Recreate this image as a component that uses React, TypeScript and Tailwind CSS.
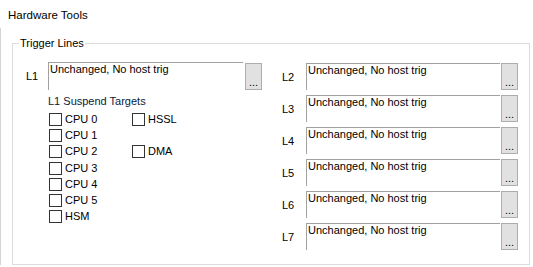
const lines = ['L2', 'L3', 'L4', 'L5', 'L6', 'L7']

const targets: [string, string | null][] = [
  ['CPU 0', 'HSSL'],
  ['CPU 1', null],
  ['CPU 2', 'DMA'],
  ['CPU 3', null],
  ['CPU 4', null],
  ['CPU 5', null],
  ['HSM', null],
]

function TriggerBox({ wide }: { wide?: boolean }) {
  return (
    <div className="flex items-center">
      <div
        className={`${wide ? 'w-[195px] h-[28px]' : 'w-[194px] h-[27px]'} border-t border-l border-[#a0a0a0] bg-white pl-[1px] leading-[13px]`}
      >
        Unchanged, No host trig
      </div>
      <button
        className={`${wide ? 'ml-[2px]' : 'ml-[1px]'} w-[17px] h-[27px] border border-[#adadad] bg-[#e1e1e1] flex items-end justify-center pb-[2px] leading-[10px] text-[11px]`}
      >
        ...
      </button>
    </div>
  )
}

function Check({ label }: { label: string }) {
  return (
    <div className="flex items-center h-[16.3px]">
      <span className="w-[13px] h-[13px] border border-[#333333] bg-white" />
      <span className="ml-[3px] leading-[13px]">{label}</span>
    </div>
  )
}

export default function App() {
  return (
    <div
      className="w-[533px] h-[267px] bg-white overflow-hidden text-[11px] text-black"
      style={{ fontFamily: '"Liberation Sans", Arial, sans-serif' }}
    >
      <div className="h-[28px] pl-[8px] pt-[8px] text-[11.5px] leading-[14px]">Hardware Tools</div>

      <div className="h-[237px] border-l border-[#d4d4d4] pl-[11px] pt-[8px]">
        <fieldset className="w-[516px] h-[227px] border border-[#dcdcdc] box-content">
          <legend className="ml-[6px] px-[1px] leading-[14px]">Trigger Lines</legend>

          <div className="flex">
            {/* L1 + suspend targets */}
            <div className="w-[256px] pl-[13px] pt-[12px]">
              <div className="flex items-center">
                <span className="w-[22px] leading-[13px]">L1</span>
                <TriggerBox wide />
              </div>
              <div className="pl-[22px] mt-[4px]">
                <div className="leading-[14px] text-[#0a1a3a]">L1 Suspend Targets</div>
                <div className="mt-[3px] pl-[1px]">
                  {targets.map(([a, b]) => (
                    <div key={a} className="flex">
                      <div className="w-[83px]">
                        <Check label={a} />
                      </div>
                      {b && <Check label={b} />}
                    </div>
                  ))}
                </div>
              </div>
            </div>

            {/* L2..L7 */}
            <div className="pl-[13px] pt-[13px] flex flex-col gap-[5px]">
              {lines.map((l) => (
                <div key={l} className="flex items-center">
                  <span className="w-[24px] leading-[13px] pt-[2px]">{l}</span>
                  <TriggerBox />
                </div>
              ))}
            </div>
          </div>
        </fieldset>
      </div>
    </div>
  )
}
